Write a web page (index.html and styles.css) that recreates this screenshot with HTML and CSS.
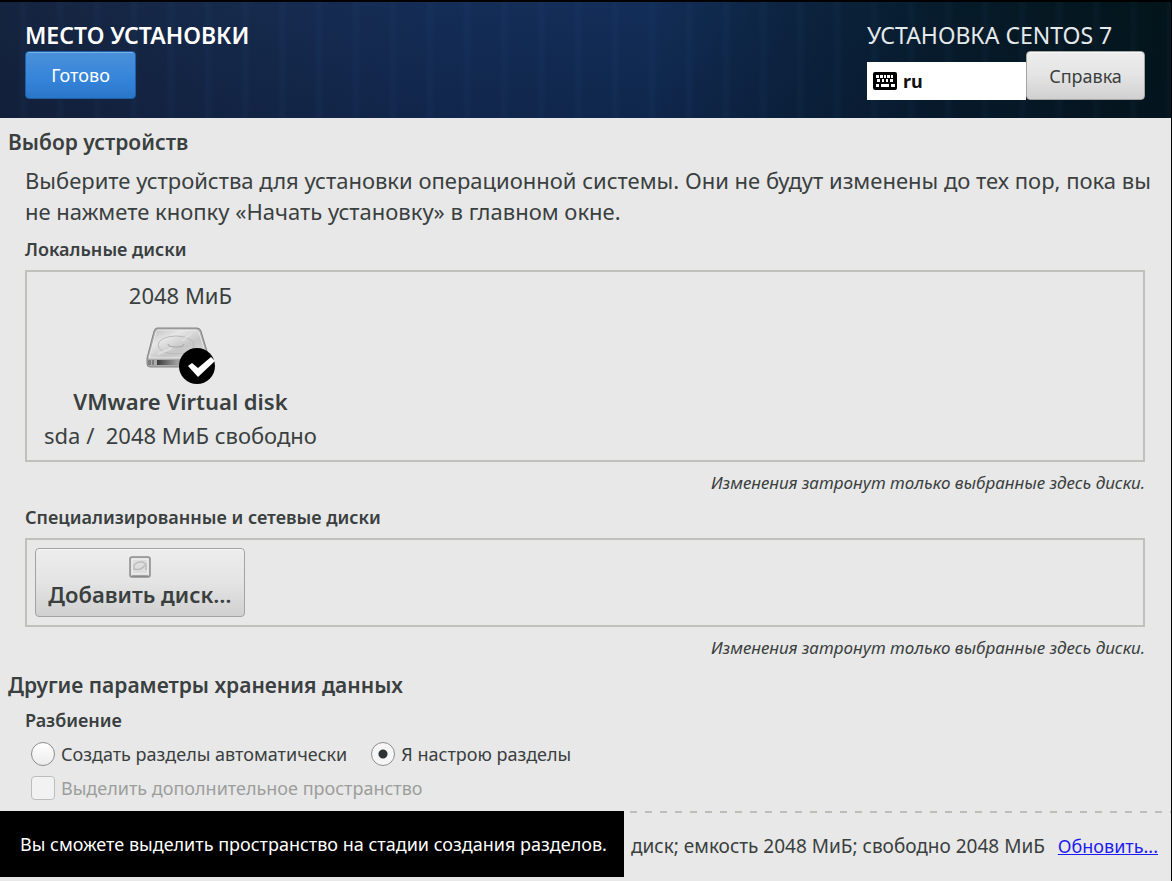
FILE: index.html
```html
<!DOCTYPE html>
<html lang="ru">
<head>
    <meta charset="UTF-8">
    <meta name="viewport" content="width=device-width, initial-scale=1.0">
    <title>Место установки</title>
    <link rel="stylesheet" href="styles.css">
</head>
<body>
    <header class="topbar">
        <div class="topbar-left">
            <h1 class="topbar-title">МЕСТО УСТАНОВКИ</h1>
            <button class="btn btn-done" type="button">Готово</button>
        </div>
        <div class="topbar-right">
            <p class="topbar-product">УСТАНОВКА CENTOS 7</p>
            <div class="topbar-tools">
                <div class="keyboard">
                    <svg class="keyboard-icon" viewBox="0 0 24 18" aria-hidden="true">
                        <rect width="24" height="18" rx="2" fill="#000"/>
                        <path fill="#fff" d="M3 3h3v3H3zM7 3h3v3H7zM11 3h2v3h-2zM14 3h3v3h-3zM18 3h2v3h-2zM4 7h3v3H4zM9 7h2v3H9zM13 7h2v3h-2zM17 7h3v3h-3zM3 12h3v3H3zM8 12h8v3H8zM18 12h4v3h-4z"/>
                    </svg>
                    <span>ru</span>
                </div>
                <button class="btn btn-help" type="button">Справка</button>
            </div>
        </div>
    </header>

    <main class="content">
        <section>
            <h2>Выбор устройств</h2>
            <div class="section-body">
                <p class="intro">Выберите устройства для установки операционной системы. Они не будут изменены до тех пор, пока вы не нажмете кнопку «Начать установку» в главном окне.</p>

                <h3>Локальные диски</h3>
                <div class="disk-box disk-box-local">
                    <div class="disk">
                        <p class="disk-size">2048 МиБ</p>
                        <svg class="disk-icon" viewBox="0 0 72 60" aria-hidden="true">
                            <defs>
                                <linearGradient id="diskTop" x1="0" y1="0" x2="1" y2="1">
                                    <stop offset="0" stop-color="#bdbdbd"/>
                                    <stop offset="0.3" stop-color="#e6e6e6"/>
                                    <stop offset="0.6" stop-color="#c6c6c6"/>
                                    <stop offset="1" stop-color="#dedede"/>
                                </linearGradient>
                                <linearGradient id="diskFront" x1="0" y1="0" x2="1" y2="0">
                                    <stop offset="0" stop-color="#3c3c3c"/>
                                    <stop offset="0.5" stop-color="#a0a0a0"/>
                                    <stop offset="1" stop-color="#777777"/>
                                </linearGradient>
                            </defs>
                            <path d="M13 2h40q3 0 4 3l8 27v6q0 3-3 3H6q-3 0-3-3v-6l7-27q1-3 3-3z" fill="#ababab" stroke="#858585"/>
                            <path d="M14 4h38q2 0 3 2l8 26H5l7-26q1-2 2-2z" fill="url(#diskTop)" stroke="#ececec"/>
                            <ellipse cx="32" cy="19" rx="18" ry="9" fill="none" stroke="#bababa"/>
                            <path d="M24 18q0 3 8 3t8-3" fill="none" stroke="#a2a2a2"/>
                            <path d="M14 28l14-6M38 15l10-8" stroke="#dedede" stroke-width="2"/>
                            <path d="M13 34h40v5H13z" fill="url(#diskFront)"/>
                            <path d="M4 34h3v5H4zM8 34h2v5H8z" fill="#7d7d7d"/>
                            <circle cx="53" cy="40" r="18" fill="#000"/>
                            <path d="M44 40l4-3 6 5 13-11 4 4-17 16z" fill="#fff"/>
                        </svg>
                        <p class="disk-name">VMware Virtual disk</p>
                        <p class="disk-info">sda /&nbsp; 2048 МиБ свободно</p>
                    </div>
                </div>
                <p class="note">Изменения затронут только выбранные здесь диски.</p>

                <h3>Специализированные и сетевые диски</h3>
                <div class="disk-box">
                    <button class="btn btn-add" type="button">
                        <svg class="add-icon" viewBox="0 0 22 22" aria-hidden="true">
                            <rect x="1" y="1" width="20" height="20" rx="2" fill="#d2d2d2" stroke="#8c8c8c" stroke-width="1.5"/>
                            <rect x="3" y="3" width="16" height="15" fill="#dedede" stroke="#f6f6f6"/>
                            <path d="M5 14V9q6-6 12-1v6M5 13q7 2 11-4" fill="none" stroke="#bcbcbc" stroke-width="1.5"/>
                            <path d="M3 20h16" stroke="#777"/>
                        </svg>
                        <span>Добавить диск…</span>
                    </button>
                </div>
                <p class="note">Изменения затронут только выбранные здесь диски.</p>
            </div>
        </section>

        <section>
            <h2>Другие параметры хранения данных</h2>
            <div class="section-body">
                <h3>Разбиение</h3>
                <div class="options">
                    <label class="option"><input type="radio" name="partitioning">Создать разделы автоматически</label>
                    <label class="option"><input type="radio" name="partitioning" checked>Я настрою разделы</label>
                </div>
                <label class="option option-disabled"><input type="checkbox" disabled>Выделить дополнительное пространство</label>
            </div>
        </section>
    </main>

    <footer class="statusbar">
        <div class="tooltip" role="tooltip">Вы сможете выделить пространство на стадии создания разделов.</div>
        <p class="summary">диск; емкость 2048 МиБ; свободно 2048 МиБ</p>
        <a class="refresh" href="#">Обновить...</a>
    </footer>
</body>
</html>
```
FILE: styles.css
```css
* {
    box-sizing: border-box;
}

body {
    margin: 0;
    min-height: 100vh;
    display: flex;
    flex-direction: column;
    background-color: #e8e8e8;
    border-top: 2px solid #000000;
    border-right: 1px solid #000000;
    color: #3a3f40;
    font-family: "Noto Sans", sans-serif;
    font-size: 18px;
    line-height: 24px;
}

h1, h2, h3, p {
    margin: 0;
}

/* Header */
.topbar {
    display: flex;
    justify-content: space-between;
    height: 116px;
    padding: 17px 26px 0 25px;
    color: #ffffff;
    background:
        repeating-linear-gradient(90deg, transparent 0 18px, rgba(60, 110, 170, 0.05) 22px 24px, transparent 29px 37px),
        linear-gradient(180deg, transparent, rgba(8, 16, 40, 0.25)),
        linear-gradient(90deg, #15243f 0%, #162a4c 20%, #142d57 38%, #122e58 55%, #0c2440 68%, #061b29 82%, #03151a 100%);
}

.topbar-title,
.topbar-product {
    font-size: 23px;
    line-height: 32px;
}

.topbar-title {
    font-weight: 600;
}

.topbar-product {
    color: #e4e9ec;
}

.topbar-tools {
    display: flex;
    align-items: flex-end;
}

.keyboard {
    display: flex;
    align-items: center;
    gap: 6px;
    width: 159px;
    height: 38px;
    padding-left: 6px;
    background-color: #ffffff;
    color: #111111;
    font-weight: 700;
}

.keyboard-icon {
    width: 24px;
    height: 18px;
}

.btn {
    padding: 0;
    border: 1px solid #a3a3a0;
    border-radius: 4px;
    background: linear-gradient(#ededed, #e4e4e4 50%, #d0d0d0);
    box-shadow: inset 0 1px #f8f8f8;
    color: #3a3f40;
    font-family: inherit;
    font-size: 18px;
    line-height: 24px;
    cursor: pointer;
}

.btn-done {
    display: block;
    width: 111px;
    height: 48px;
    border-color: #1f5fa8;
    background: linear-gradient(#4a90d9, #3584da 60%, #2a76c8);
    box-shadow: inset 0 1px #78b0e8;
    color: #ffffff;
}

.btn-help {
    width: 119px;
    height: 49px;
}

/* Content */
.content {
    flex: 1;
    padding: 9px 26px 0 8px;
}

h2 {
    margin-bottom: 8px;
    font-size: 21px;
    line-height: 30px;
    font-weight: 600;
}

h3 {
    font-size: 18px;
    line-height: 24px;
    font-weight: 600;
}

.section-body {
    padding-left: 17px;
}

.intro {
    margin: 0 -10px 10px 0;
    font-size: 22px;
    line-height: 31px;
}

.disk-box {
    display: flex;
    align-items: flex-start;
    margin: 9px 0;
    padding: 8px;
    border: 2px solid #c0c0bd;
}

.disk-box-local {
    height: 192px;
}

.disk {
    padding: 0 9px;
    text-align: center;
    font-size: 22px;
    line-height: 30px;
}

.disk-icon {
    display: block;
    width: 72px;
    height: 60px;
    margin: 16px auto 0;
}

.disk-name {
    margin-bottom: 4px;
    font-weight: 600;
}

.btn-add {
    display: flex;
    flex-direction: column;
    align-items: center;
    width: 210px;
    padding: 7px 0 6px;
    font-size: 22px;
    line-height: 32px;
    font-weight: 600;
}

.add-icon {
    width: 22px;
    height: 22px;
}

.note {
    margin-bottom: 10px;
    font-size: 17px;
    text-align: right;
    font-style: italic;
}

.options {
    display: flex;
    gap: 18px;
    margin-top: 10px;
}

.option {
    display: flex;
    align-items: center;
    gap: 6px;
    padding-left: 6px;
}

.option-disabled {
    margin: 10px 0;
    color: #9c9e9c;
}

.option input {
    appearance: none;
    width: 24px;
    height: 24px;
    margin: 0;
    border: 1px solid #8c8e8c;
    background: linear-gradient(#ffffff, #ececec);
}

.option input[type="radio"] {
    border-radius: 50%;
}

.option input[type="radio"]:checked {
    background: radial-gradient(circle, #2e3436 0 4px, #f6f6f6 5px);
}

.option input[type="checkbox"] {
    border-color: #bcbebc;
    border-radius: 4px;
    background: #f2f2f2;
}

/* Status bar */
.statusbar {
    display: flex;
    align-items: center;
    height: 70px;
    background: repeating-linear-gradient(90deg, #bdbdba 0 7px, transparent 7px 15px) top / 100% 2px no-repeat;
}

.tooltip {
    align-self: flex-start;
    width: 624px;
    padding: 21px 20px;
    background-color: #000000;
    color: #ffffff;
    white-space: nowrap;
}

.summary {
    flex: 1;
    padding-left: 7px;
    font-size: 19px;
    white-space: nowrap;
}

.refresh {
    margin-right: 13px;
    color: #1c1cf0;
}
```
